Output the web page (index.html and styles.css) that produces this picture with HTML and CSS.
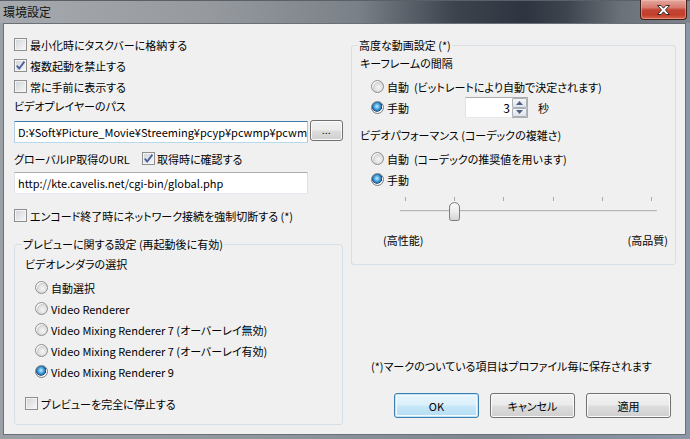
FILE: index.html
```html
<!DOCTYPE html>
<html lang="ja">
<head>
<meta charset="utf-8">
<title>環境設定</title>
<link rel="stylesheet" href="styles.css">
</head>
<body>
<div class="window">
  <div class="titlebar">
    <span class="title">環境設定</span>
    <div class="close">
      <svg width="15" height="12" viewBox="0 0 15 12"><path d="M1.5 1.5 H5.2 L7.5 4.2 L9.8 1.5 H13.5 L9.5 6 L13.5 10.5 H9.8 L7.5 7.8 L5.2 10.5 H1.5 L5.5 6 Z" fill="#fff" stroke="#3b2a2a" stroke-width="1" stroke-linejoin="round"/></svg>
    </div>
  </div>
  <div class="client">
    <div class="col-left">
      <label class="row"><span class="cb"></span>最小化時にタスクバーに格納する</label>
      <label class="row"><span class="cb"><svg width="11" height="11" viewBox="0 0 11 11"><path d="M1.8 5.6 L4.2 8.6 L9.4 1.6" fill="none" stroke="#4a5e9c" stroke-width="1.8"/></svg></span>複数起動を禁止する</label>
      <label class="row"><span class="cb"></span>常に手前に表示する</label>
      <div class="label">ビデオプレイヤーのパス</div>
      <div class="path-row">
        <div class="textbox focused">D:¥Soft¥Picture_Movie¥Streeming¥pcyp¥pcwmp¥pcwmp.exe</div>
        <button class="btn browse">...</button>
      </div>
      <div class="row url-row">
        <span class="url-label">グローバルIP取得のURL</span>
        <label class="inline"><span class="cb"><svg width="11" height="11" viewBox="0 0 11 11"><path d="M1.8 5.6 L4.2 8.6 L9.4 1.6" fill="none" stroke="#4a5e9c" stroke-width="1.8"/></svg></span>取得時に確認する</label>
      </div>
      <div class="textbox url">http://kte.cavelis.net/cgi-bin/global.php</div>
      <label class="row force"><span class="cb"></span>エンコード終了時にネットワーク接続を強制切断する (*)</label>
      <fieldset class="group preview">
        <legend>プレビューに関する設定 (再起動後に有効)</legend>
        <div class="sublabel">ビデオレンダラの選択</div>
        <div class="radios">
          <label class="rrow"><span class="rb"></span>自動選択</label>
          <label class="rrow"><span class="rb"></span>Video Renderer</label>
          <label class="rrow"><span class="rb"></span>Video Mixing Renderer 7 (オーバーレイ無効)</label>
          <label class="rrow"><span class="rb"></span>Video Mixing Renderer 7 (オーバーレイ有効)</label>
          <label class="rrow"><span class="rb on"></span>Video Mixing Renderer 9</label>
        </div>
        <label class="row stop"><span class="cb"></span>プレビューを完全に停止する</label>
      </fieldset>
    </div>
    <div class="col-right">
      <fieldset class="group advanced">
        <legend>高度な動画設定 (*)</legend>
        <div class="sublabel">キーフレームの間隔</div>
        <label class="rrow first"><span class="rb"></span>自動&nbsp;&nbsp;(ビットレートにより自動で決定されます)</label>
        <div class="rrow">
          <span class="rb on"></span><span class="manual">手動</span>
          <div class="spin">
            <div class="spin-field">3</div>
            <div class="spin-btns">
              <span class="sb up"><svg width="7" height="4" viewBox="0 0 7 4"><path d="M0 4 L3.5 0 L7 4 Z" fill="#4d6185"/></svg></span>
              <span class="sb down"><svg width="7" height="4" viewBox="0 0 7 4"><path d="M0 0 L3.5 4 L7 0 Z" fill="#4d6185"/></svg></span>
            </div>
          </div>
          <span class="unit">秒</span>
        </div>
        <div class="sublabel perf">ビデオパフォーマンス (コーデックの複雑さ)</div>
        <label class="rrow first"><span class="rb"></span>自動&nbsp;&nbsp;(コーデックの推奨値を用います)</label>
        <label class="rrow"><span class="rb on"></span>手動</label>
        <div class="slider">
          <div class="ticks"><i></i><i></i><i></i><i></i><i></i><i></i></div>
          <div class="track">
            <svg class="thumb" width="11" height="19" viewBox="0 0 11 19">
              <defs><linearGradient id="tg" x1="0" y1="0" x2="0" y2="1"><stop offset="0" stop-color="#fafafa"/><stop offset="0.5" stop-color="#ececec"/><stop offset="1" stop-color="#d2d2d2"/></linearGradient></defs>
              <path d="M0.5 5 Q0.5 2.5 3 1.2 L5.5 0.5 L8 1.2 Q10.5 2.5 10.5 5 V16.5 Q10.5 18.5 8.5 18.5 H2.5 Q0.5 18.5 0.5 16.5 Z" fill="url(#tg)" stroke="#7c7c7c"/>
            </svg>
          </div>
        </div>
        <div class="scale"><span>(高性能)</span><span>(高品質)</span></div>
      </fieldset>
      <div class="note">(*)マークのついている項目はプロファイル毎に保存されます</div>
      <div class="buttons">
        <button class="btn default">OK</button>
        <button class="btn">キャンセル</button>
        <button class="btn">適用</button>
      </div>
    </div>
  </div>
</div>
</body>
</html>
```
FILE: styles.css
```css
* { box-sizing: border-box; }
html, body { margin: 0; padding: 0; }
body {
  width: 690px;
  height: 439px;
  overflow: hidden;
  font-family: "Noto Sans CJK JP", "Noto Sans", sans-serif;
  font-size: 11px;
  color: #000;
  font-feature-settings: "palt";
}
.window {
  width: 690px;
  height: 439px;
  display: flex;
  flex-direction: column;
  background: linear-gradient(90deg, #9aa0a6 0%, #8f959c 40%, #7e868f 70%, #8c98a8 100%);
}
.titlebar {
  height: 23px;
  display: flex;
  align-items: flex-start;
  justify-content: space-between;
  background: linear-gradient(90deg, #a6aaae 0%, #969a9f 30%, #7a8087 52%, #3c434d 66%, #2e3540 76%, #3d444e 82%, #6b7178 90%, #80858b 100%);
  border-top: 1px solid #5a6068;
}
.title {
  padding: 3px 0 0 3px;
  line-height: 16px;
  font-size: 12px;
  color: #111;
}
.close {
  width: 47px;
  height: 20px;
  margin: -1px 3px 0 0;
  border: 1px solid #3f1f1b;
  border-top: none;
  border-radius: 0 0 4px 4px;
  background: linear-gradient(#e3a79e 0%, #d87a6e 40%, #c44535 52%, #c23e2c 78%, #d8664a 100%);
  box-shadow: inset 0 0 0 1px rgba(255, 200, 190, 0.45);
  display: flex;
  align-items: center;
  justify-content: center;
}
.client {
  flex: 1;
  margin: 0 4px 4px 3px;
  border: 1px solid #6a7078;
  background: #f0f0f0;
  display: flex;
  padding: 10px 0 0 10px;
}
.col-left { width: 329px; }
.row {
  height: 21px;
  display: flex;
  align-items: center;
  white-space: nowrap;
}
.cb {
  width: 13px;
  height: 13px;
  flex: none;
  margin-right: 3px;
  border: 1px solid #8f8f8f;
  background: linear-gradient(135deg, #cfd3d8 0%, #e9eaec 60%, #f8f8f8 100%);
  box-shadow: inset 0 0 0 1px #f4f4f4;
  display: flex;
  align-items: center;
  justify-content: center;
}
.label, .sublabel {
  height: 18px;
  line-height: 18px;
  white-space: nowrap;
}
.path-row {
  margin-top: 6px;
  display: flex;
  gap: 2px;
  align-items: flex-start;
}
.textbox {
  width: 294px;
  height: 22px;
  border: 1px solid;
  border-color: #abadb3 #dbdfe6 #e3e9ef #e2e3ea;
  background: #fff;
  padding: 0 3px;
  line-height: 20px;
  white-space: nowrap;
  overflow: hidden;
}
.textbox.focused {
  border-color: #3d7bad #a4c9e3 #b7d9ed #b5cfe7;
  border-radius: 1px;
}
.btn {
  font-family: inherit;
  font-size: 11px;
  font-feature-settings: "palt";
  color: #000;
  border: 1px solid #707070;
  border-radius: 3px;
  background: linear-gradient(#f2f2f2 0%, #ebebeb 48%, #dddddd 52%, #cfcfcf 100%);
  box-shadow: inset 0 0 0 1px #fbfbfb;
  padding: 0;
  margin: 0;
}
.btn.browse {
  width: 33px;
  height: 21px;
  margin-top: -1px;
  font-size: 9px;
  line-height: 14px;
  letter-spacing: 0.5px;
}
.url-row { margin-top: 5px; }
.url-label { width: 128px; flex: none; }
.inline { display: flex; align-items: center; }
.inline .cb { margin-right: 2px; }
.textbox.url { margin-top: 3px; }
.force { margin-top: 11px; }
.group {
  margin: 0;
  border: 1px solid #d5dfe5;
  border-radius: 3px;
  min-width: 0;
}
.group legend {
  padding: 0 1px;
  line-height: 16px;
  height: 16px;
  white-space: nowrap;
}
.preview {
  width: 329px;
  margin-top: 10px;
  padding: 3px 10px 10px 10px;
}
.preview legend { margin-left: -3px; }
.preview .sublabel { height: 19px; line-height: 19px; }
.radios { margin-top: 3px; padding-left: 10px; }
.rrow {
  height: 21px;
  display: flex;
  align-items: center;
  white-space: nowrap;
}
.rb {
  width: 13px;
  height: 13px;
  flex: none;
  margin-right: 3px;
  border-radius: 50%;
  border: 1px solid #8e8f8f;
  background: radial-gradient(circle at 60% 60%, #f4f4f4 0%, #e2e2e2 40%, #cfd1d4 56%, #f6f6f6 62%, #f6f6f6 100%);
}
.rb.on {
  background:
    radial-gradient(circle at 45% 40%, #c9ecff 0%, #55aee4 28%, #1f73b6 48%, #194a78 56%, #f3f3f3 62%, #f3f3f3 100%);
  border-color: #7c7e80;
}
.stop { margin-top: 11px; }
.col-right {
  width: 325px;
  margin-left: 8px;
  padding-top: 3px;
  padding-bottom: 16px;
  display: flex;
  flex-direction: column;
}
.advanced {
  width: 325px;
  padding: 1px 7px 14px 8px;
}
.advanced legend { margin-left: -2px; }
.advanced .sublabel { height: 19px; line-height: 19px; }
.advanced .rrow { padding-left: 11px; }
.advanced .rrow.first { margin-top: 3px; }
.manual { width: 78px; flex: none; }
.spin {
  display: flex;
  height: 21px;
  width: 63px;
}
.spin-field {
  width: 47px;
  height: 21px;
  border: 1px solid;
  border-color: #abadb3 #dbdfe6 #e3e9ef #e2e3ea;
  border-right: none;
  background: #fff;
  text-align: right;
  padding-right: 2px;
  line-height: 19px;
  font-size: 12px;
}
.spin-btns {
  width: 16px;
  display: flex;
  flex-direction: column;
  background: #fff;
  border: 1px solid #abadb3;
  border-left: none;
}
.sb {
  flex: 1;
  display: flex;
  align-items: center;
  justify-content: center;
  border: 1px solid #a9b0b8;
  background: linear-gradient(#f6f6f6, #dfe3e8);
  border-radius: 1px;
}
.unit { margin-left: 10px; }
.advanced .perf { margin-top: 8px; }
.slider {
  width: 257px;
  margin-left: 40px;
  padding-top: 7px;
  padding-bottom: 10px;
}
.ticks {
  display: flex;
  justify-content: space-between;
  padding: 0 5px;
  height: 4px;
}
.ticks i { width: 1px; background: #a9a9a9; }
.track {
  position: relative;
  margin-top: 9px;
  height: 2px;
  background: linear-gradient(#b4b4b4 0 1px, #e6e6e6 1px 2px);
}
.thumb {
  position: absolute;
  left: 49px;
  top: -8px;
}
.scale {
  margin-top: 9px;
  height: 19px;
  line-height: 19px;
  padding-left: 23px;
  display: flex;
  justify-content: space-between;
}
.note {
  margin-top: auto;
  margin-left: 20px;
  height: 19px;
  line-height: 19px;
  white-space: nowrap;
}
.buttons {
  margin-top: 17px;
  display: flex;
  gap: 11px;
  padding-left: 43px;
}
.buttons .btn {
  width: 85px;
  height: 25px;
}
.btn.default {
  border-color: #3c7fb1;
  background: linear-gradient(#e8f5fc 0%, #dbf0fb 48%, #c6e7f8 52%, #b3dcf3 100%);
  box-shadow: inset 0 0 0 1px #bfe4fa, inset 0 0 0 2px #f4fbff;
}
```
